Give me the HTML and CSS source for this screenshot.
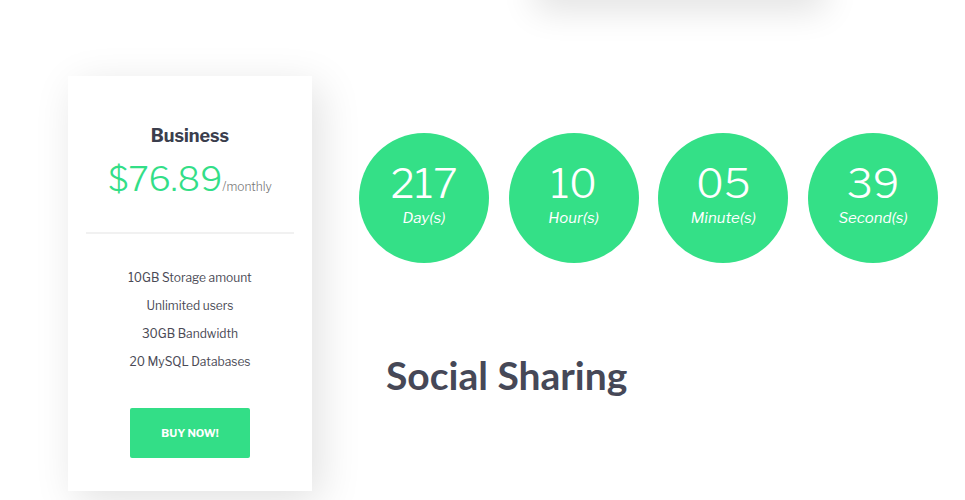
FILE: index.html
```
<html>
	<head>
		<title>Pricing and countdown</title>
		<link rel="stylesheet" href="styles.css">
	</head>
	<body>
		<div class="top-box"></div>
		<div class="page">
			<div class="plan">
				<h3 class="plan-name">Business</h3>
				<div class="plan-price">$76.89<span class="per">/monthly</span></div>
				<ul class="features">
					<li>10GB Storage amount</li>
					<li>Unlimited users</li>
					<li>30GB Bandwidth</li>
					<li>20 MySQL Databases</li>
				</ul>
				<a class="buy" href="#">BUY NOW!</a>
			</div>
			<div class="side">
				<div class="countdown">
					<div class="circle"><span class="num">217</span><span class="unit">Day(s)</span></div>
					<div class="circle"><span class="num">10</span><span class="unit">Hour(s)</span></div>
					<div class="circle"><span class="num">05</span><span class="unit">Minute(s)</span></div>
					<div class="circle"><span class="num">39</span><span class="unit">Second(s)</span></div>
				</div>
				<h2 class="section-title">Social Sharing</h2>
			</div>
		</div>
	</body>
</html>
```

FILE: styles.css
```
body {
	margin: 0;
	background: #fff;
	font-family: "Libre Franklin", Lato, "Open Sans", sans-serif;
	color: #555;
	overflow: hidden;
}
.top-box {
	width: 290px;
	height: 40px;
	margin: -40px 0 0 535px;
	background: #fff;
	box-shadow: 0 10px 35px rgba(0, 0, 0, 0.12);
	border-radius: 4px;
}
.page {
	display: flex;
	padding: 76px 0 0 68px;
}
.plan {
	width: 244px;
	height: 415px;
	box-sizing: border-box;
	padding: 49px 18px 0;
	background: #fff;
	text-align: center;
	box-shadow: 8px 10px 40px rgba(0, 0, 0, 0.12);
}
.plan-name {
	margin: 0;
	font-size: 18px;
	font-weight: 700;
	color: #3b3e4d;
	line-height: 22px;
}
.plan-price {
	margin-top: 10px;
	padding-bottom: 23px;
	border-bottom: 2px solid #f1f1f1;
	font-size: 34px;
	font-weight: 300;
	color: #33de87;
	line-height: 44px;
}
.per {
	font-size: 12px;
	color: #777;
}
.features {
	list-style: none;
	margin: 0;
	padding: 30px 0 0;
	font-size: 12px;
	line-height: 28px;
	color: #4a4a55;
}
.buy {
	display: block;
	width: 120px;
	height: 50px;
	margin: 32px auto 0;
	border-radius: 2px;
	background: #33de87;
	color: #fff;
	font-size: 11px;
	font-weight: 700;
	line-height: 50px;
	text-decoration: none;
}
.side {
	padding: 57px 0 0 47px;
}
.countdown {
	display: flex;
	gap: 19.7px;
}
.circle {
	width: 130px;
	height: 130px;
	box-sizing: border-box;
	padding-bottom: 10px;
	border-radius: 50%;
	background: #34e087;
	color: #fff;
	display: flex;
	flex-direction: column;
	align-items: center;
	justify-content: center;
}
.num {
	font-size: 41px;
	font-weight: 300;
	line-height: 50px;
}
.unit {
	font-size: 15px;
	font-style: italic;
	line-height: 20px;
}
.section-title {
	margin: 88px 0 0 27px;
	font-family: Lato, sans-serif;
	font-size: 39px;
	font-weight: 700;
	color: #464857;
	line-height: 48px;
}
```
